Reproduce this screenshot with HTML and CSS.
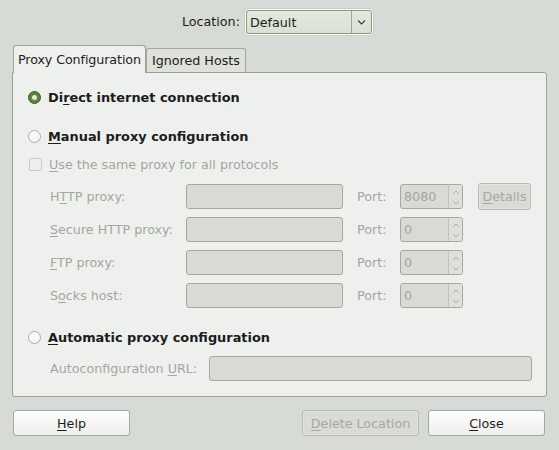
FILE: index.html
```html
<!DOCTYPE html>
<html>
<head>
<meta charset="utf-8">
<link rel="stylesheet" href="styles.css">
</head>
<body>
<div class="top">
  <span class="loc-label">Location:</span>
  <div class="combo">
    <div class="combo-inner">
      <span class="combo-text">Default</span>
      <span class="combo-arrow"><svg width="9" height="5" viewBox="0 0 9 5"><path d="M1 0.5 L4.5 4 L8 0.5" fill="none" stroke="#3a3f38" stroke-width="1.2"/></svg></span>
    </div>
  </div>
</div>

<div class="notebook">
  <div class="tabs">
    <div class="tab active">Proxy Configuration</div>
    <div class="tab">Ignored Hosts</div>
  </div>
  <div class="panel">
    <div class="radio-row first">
      <span class="radio checked"><span class="dot"></span></span>
      <span class="bold">Di<u>r</u>ect internet connection</span>
    </div>
    <div class="radio-row second">
      <span class="radio"></span>
      <span class="bold"><u>M</u>anual proxy configuration</span>
    </div>
    <div class="check-row">
      <span class="check"></span>
      <span class="dis"><u>U</u>se the same proxy for all protocols</span>
    </div>
    <div class="proxy-grid">
      <span class="dis lbl">H<u>T</u>TP proxy:</span>
      <span class="entry"></span>
      <span class="dis port">Port:</span>
      <span class="spin"><span class="spin-val">8080</span><span class="spin-arrows"><svg width="8" height="20" viewBox="0 0 8 20"><path d="M1 7 L4 4 L7 7" fill="none" stroke="#a8ada5" stroke-width="1"/><path d="M1 14 L4 17 L7 14" fill="none" stroke="#a8ada5" stroke-width="1"/></svg></span></span>
      <span class="details-cell"><span class="btn disabled details"><u>D</u>etails</span></span>

      <span class="dis lbl"><u>S</u>ecure HTTP proxy:</span>
      <span class="entry"></span>
      <span class="dis port">Port:</span>
      <span class="spin"><span class="spin-val">0</span><span class="spin-arrows"><svg width="8" height="20" viewBox="0 0 8 20"><path d="M1 7 L4 4 L7 7" fill="none" stroke="#a8ada5" stroke-width="1"/><path d="M1 14 L4 17 L7 14" fill="none" stroke="#a8ada5" stroke-width="1"/></svg></span></span>
      <span></span>

      <span class="dis lbl"><u>F</u>TP proxy:</span>
      <span class="entry"></span>
      <span class="dis port">Port:</span>
      <span class="spin"><span class="spin-val">0</span><span class="spin-arrows"><svg width="8" height="20" viewBox="0 0 8 20"><path d="M1 7 L4 4 L7 7" fill="none" stroke="#a8ada5" stroke-width="1"/><path d="M1 14 L4 17 L7 14" fill="none" stroke="#a8ada5" stroke-width="1"/></svg></span></span>
      <span></span>

      <span class="dis lbl">S<u>o</u>cks host:</span>
      <span class="entry"></span>
      <span class="dis port">Port:</span>
      <span class="spin"><span class="spin-val">0</span><span class="spin-arrows"><svg width="8" height="20" viewBox="0 0 8 20"><path d="M1 7 L4 4 L7 7" fill="none" stroke="#a8ada5" stroke-width="1"/><path d="M1 14 L4 17 L7 14" fill="none" stroke="#a8ada5" stroke-width="1"/></svg></span></span>
      <span></span>
    </div>
    <div class="radio-row third">
      <span class="radio"></span>
      <span class="bold"><u>A</u>utomatic proxy configuration</span>
    </div>
    <div class="url-row">
      <span class="dis">Autoconfiguration <u>U</u>RL:</span>
      <span class="entry url"></span>
    </div>
  </div>
</div>

<div class="buttons">
  <span class="btn wide"><u>H</u>elp</span>
  <span class="spacer"></span>
  <span class="btn wide disabled"><u>D</u>elete Location</span>
  <span class="btn wide"><u>C</u>lose</span>
</div>
</body>
</html>
```

FILE: styles.css
```css
html, body {
  margin: 0;
  padding: 0;
}
body {
  background: #d7dbd5;
  font-family: "DejaVu Sans", sans-serif;
  font-size: 12.7px;
  color: #1c1c1c;
  width: 559px;
  height: 450px;
  overflow: hidden;
}
u {
  text-decoration: underline;
  text-underline-offset: 2px;
}
.top {
  height: 45px;
  display: flex;
  align-items: flex-start;
  padding-left: 182px;
  box-sizing: border-box;
  padding-top: 9px;
}
.loc-label {
  line-height: 26px;
  margin-right: 5px;
  width: 58px;
}
.combo {
  width: 128px;
  height: 26px;
  box-sizing: border-box;
  border: 1px solid #fbfcfa;
  border-radius: 4px;
  box-shadow: 0 0 0 1px #c9cec6;
}
.combo-inner {
  height: 24px;
  box-sizing: border-box;
  border: 1px solid #8a9a7c;
  border-radius: 3px;
  background: linear-gradient(#e4e9e0, #d9e0d4);
  display: flex;
  align-items: center;
}
.combo-text {
  flex: 1;
  padding-left: 3px;
}
.combo-arrow {
  width: 19px;
  height: 22px;
  border-left: 1px solid #9aa890;
  display: flex;
  align-items: center;
  justify-content: center;
}
.notebook {
  margin-left: 12px;
  width: 535px;
}
.tabs {
  height: 27px;
  display: flex;
  align-items: flex-end;
  padding-left: 1px;
  position: relative;
  z-index: 1;
}
.tab {
  height: 24px;
  box-sizing: border-box;
  border: 1px solid #a3a99f;
  border-bottom: none;
  border-radius: 3px 3px 0 0;
  background: #dde1da;
  padding: 0 5px;
  line-height: 24px;
}
.tab.active {
  height: 28px;
  margin-bottom: -1px;
  background: #eef0ed;
  line-height: 28px;
  padding: 0 4px 0 4px;
  border-color: #9aa196;
  letter-spacing: -0.1px;
}
.panel {
  height: 325px;
  box-sizing: border-box;
  border: 1px solid #9ba197;
  border-radius: 0 3px 3px 3px;
  background: #eef0ed;
  padding-left: 15px;
}
.radio-row, .check-row {
  display: flex;
  align-items: center;
  height: 20px;
}
.radio-row.first { margin-top: 14px; }
.radio-row.second { margin-top: 19px; }
.check-row { margin-top: 8px; }
.radio-row.third { margin-top: 19px; }
.bold {
  font-weight: bold;
  font-size: 12.9px;
}
.radio {
  width: 11px;
  height: 11px;
  border-radius: 50%;
  border: 1px solid #a7aca4;
  background: linear-gradient(#ffffff, #f3f4f2);
  margin-right: 7px;
  display: flex;
  align-items: center;
  justify-content: center;
}
.radio.checked {
  border-color: #3d5a27;
  background: #5e8240;
}
.radio .dot {
  width: 5px;
  height: 5px;
  border-radius: 50%;
  background: #e3e6df;
}
.check {
  width: 11px;
  height: 11px;
  border: 1px solid #c9cdc6;
  border-radius: 2px;
  background: #ecefea;
  margin-left: 1px;
  margin-right: 7px;
}
.dis {
  color: #a2a79f;
}
.proxy-grid {
  margin-top: 10px;
  margin-left: 22px;
  display: grid;
  grid-template-columns: 136px 157px 57px 63px 68px;
  grid-template-rows: 25px 25px 25px 25px;
  row-gap: 8px;
  align-items: center;
}
.entry {
  height: 25px;
  box-sizing: border-box;
  border: 1px solid #a3aa9f;
  border-radius: 3px;
  background: #d7dbd4;
  display: block;
}
.port {
  padding-left: 14px;
}
.spin {
  height: 25px;
  box-sizing: border-box;
  border: 1px solid #a3aa9f;
  border-radius: 3px;
  background: #d7dbd4;
  display: flex;
  align-items: center;
  color: #a2a79f;
}
.spin-val {
  flex: 1;
  padding-left: 3px;
}
.spin-arrows {
  width: 13px;
  height: 23px;
  border-left: 1px solid #bfc5bc;
  background: #dde1da;
  display: flex;
  align-items: center;
  justify-content: center;
  border-radius: 0 2px 2px 0;
}
.details-cell {
  padding-left: 15px;
  display: flex;
}
.btn {
  box-sizing: border-box;
  height: 26px;
  border: 1px solid #a4a9a1;
  border-radius: 3px;
  background: linear-gradient(#fdfdfc, #eeefec);
  display: flex;
  align-items: center;
  justify-content: center;
}
.btn.disabled {
  background: #d8dcd5;
  border-color: #b6bcb3;
  color: #a4a9a1;
  box-shadow: inset 0 0 0 1px #e2e5df;
}
.details {
  width: 53px;
  height: 27px;
}
.url-row {
  margin-top: 9px;
  margin-left: 22px;
  display: flex;
  align-items: center;
  height: 25px;
}
.url-row .dis {
  width: 159px;
}
.entry.url {
  width: 323px;
}
.buttons {
  margin-top: 13px;
  padding: 0 14px 0 13px;
  display: flex;
  gap: 9px;
}
.btn.wide {
  width: 117px;
}
.spacer {
  flex: 1;
}
```
